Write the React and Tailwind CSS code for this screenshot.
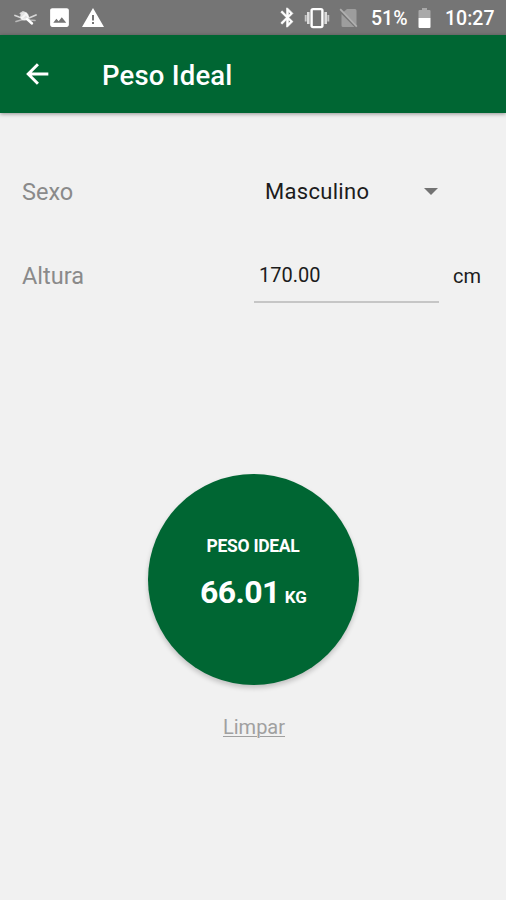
import React from 'react'

const StatusBar = () => (
  <div className="flex h-[35px] items-center bg-[#757575] text-white">
    {/* Notifications */}
    <svg className="ml-[14px] h-[20px] w-[24px] shrink-0" viewBox="0 0 24 20" fill="none" stroke="#fff" strokeLinecap="round">
      <path d="M1 7.5 5 9l3 1 4-4 3 4 7-3" strokeWidth="1.8" opacity=".7" />
      <path d="M2 13.5 7 12l4-1 5 1 5 .5" strokeWidth="1.6" opacity=".5" />
      <path d="M6.5 5.5 9 4l3 1" strokeWidth="1.8" opacity=".7" />
      <ellipse cx="10.5" cy="8.5" rx="4.2" ry="4" fill="#fff" stroke="none" opacity=".8" />
      <path d="m13 11 5 4.5" strokeWidth="2.4" />
    </svg>
    <svg className="ml-[9px] h-[25px] w-[25px] shrink-0" viewBox="0 0 24 24" fill="#fff">
      <path d="M21 19V5c0-1.100-.9-2-2-2H5c-1.100 0-2 .9-2 2v14c0 1.100.9 2 2 2h14c1.100 0 2-.9 2-2zM6 17l3-3.700 2.200 2.200 3-3.700L18.500 17z" />
    </svg>
    <svg className="ml-[9px] h-[24px] w-[24px] shrink-0" viewBox="0 0 24 24" fill="#fff">
      <path d="M1 21h22L12 2 1 21zm12-3h-2v-2h2v2zm0-3.500h-2v-5.500h2v5.500z" />
    </svg>

    {/* System icons */}
    <svg className="ml-[171px] h-[23px] w-[23px] shrink-0" viewBox="0 0 24 24" fill="#fff" stroke="#fff" strokeWidth=".6">
      <path d="M17.710 7.710L12 2h-1v7.590L6.410 5 5 6.410 10.590 12 5 17.590 6.410 19 11 14.410V22h1l5.710-5.710-4.300-4.290 4.300-4.290zM13 5.830l1.880 1.880L13 9.590V5.830zm1.880 10.460L13 18.170v-3.760l1.880 1.880z" />
    </svg>
    <svg className="ml-[5px] h-[24px] w-[26px] shrink-0" viewBox="0 0 26 24" fill="none" stroke="#fff">
      <rect x="7.600" y="3.100" width="10.800" height="18" rx="1.500" strokeWidth="2.400" />
      <path d="M4.300 6v12M21.700 6v12" strokeWidth="2.600" opacity=".75" />
      <path d="M1.700 9v6.500M24.300 9v6.500" strokeWidth="1.900" opacity=".6" />
    </svg>
    <svg className="ml-[9px] h-[24px] w-[20px] shrink-0" viewBox="0 0 20 24">
      <path d="M8 3h8a1.500 1.500 0 0 1 1.500 1.500v15.200L4 6.500zM2.500 8l13 13H4a1.500 1.500 0 0 1-1.500-1.500z" fill="#9d9d9d" />
      <path d="m1.200 3.200 16.600 17.400" stroke="#b0b0b0" strokeWidth="1.700" />
    </svg>
    <span className="ml-[12px] w-[47px] pt-[3px] text-[19.5px] font-medium leading-none">51%</span>
    <svg className="h-[22px] w-[13px] shrink-0" viewBox="0 0 13 22">
      <path d="M4 1h5v2h2.500a1 1 0 0 1 1 1v7H.5V4a1 1 0 0 1 1-1H4z" fill="#a9a9a9" />
      <path d="M.5 11h12v9a1 1 0 0 1-1 1h-10a1 1 0 0 1-1-1z" fill="#fff" />
    </svg>
    <span className="ml-[14px] whitespace-nowrap pt-[3px] text-[19.5px] font-medium leading-none">10:27</span>
  </div>
)

const AppBar = () => (
  <header className="relative flex h-[78px] items-center bg-[#006633] text-white shadow-[0_1px_4px_rgba(0,0,0,0.4)]">
    <button className="ml-[21px]" aria-label="Voltar">
      <svg className="h-[32px] w-[32px]" viewBox="0 0 24 24" fill="none" stroke="currentColor" strokeWidth="2.2">
        <path d="M20.500 12H5.500M12.700 4.700 5.400 12l7.300 7.300" />
      </svg>
    </button>
    <h1 className="ml-[49px] mt-[3px] text-[27.5px] font-medium leading-none tracking-[0.2px]">Peso Ideal</h1>
  </header>
)

const App = () => {
  return (
    <div className="flex h-[900px] w-[506px] flex-col overflow-hidden bg-[#f1f1f1] font-[Roboto,sans-serif]">
      <StatusBar />
      <AppBar />

      {/* Form */}
      <div className="flex flex-col pl-[22px] pt-[53px]">
        <div className="flex h-[50px] items-center">
          <span className="w-[243px] pt-[3px] text-[23.5px] text-[#8a8a8a]">Sexo</span>
          <span className="w-[159px] text-[22px] tracking-[0.3px] text-[#1c1c1c]">Masculino</span>
          <svg className="h-[7px] w-[14px]" viewBox="0 0 14 7" fill="#737373">
            <path d="M0 0h14L7 7z" />
          </svg>
        </div>
        <div className="mt-[35px] flex h-[52px] items-center">
          <span className="w-[232px] text-[23.5px] text-[#8a8a8a]">Altura</span>
          <input
            className="h-[52px] w-[185px] border-b-2 border-[#c6c6c6] bg-transparent pb-[2px] pl-[5px] text-[20px] text-[#1c1c1c] outline-none"
            defaultValue="170.00"
            aria-label="Altura"
          />
          <span className="ml-[14px] pb-[2px] text-[20px] text-[#1c1c1c]">cm</span>
        </div>
      </div>

      {/* Result */}
      <div className="mt-[171px] flex flex-col items-center">
        <div className="flex h-[211px] w-[211px] flex-col items-center rounded-full bg-[#006633] pt-[62px] text-white shadow-[0_3px_5px_rgba(0,0,0,0.2)]">
          <div className="text-[17.5px] font-bold leading-[20px] tracking-[-0.3px]">PESO IDEAL</div>
          <div className="ml-px mt-[16px] flex items-baseline gap-[5px] leading-[40px]">
            <span className="text-[32px] font-bold tracking-[-0.6px]">66.01</span>
            <span className="text-[17px] font-bold">KG</span>
          </div>
        </div>
        <button className="ml-[2px] mt-[27px] text-[20px] leading-[30px] text-[#a0a0a0] underline decoration-1 underline-offset-2">Limpar</button>
      </div>
    </div>
  )
}

export default App
